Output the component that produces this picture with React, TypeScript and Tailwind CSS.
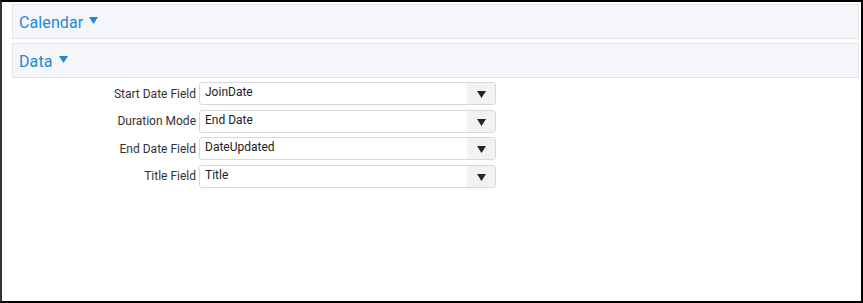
import React from "react";

function Tri({ className }: { className?: string }) {
  return (
    <svg width="9" height="7" viewBox="0 0 9 7" className={className}>
      <polygon points="0,0 9,0 4.5,7" fill="currentColor" />
    </svg>
  );
}

function Panel({ title }: { title: string }) {
  return (
    <div className="h-[35px] bg-[#f5f6fa] border border-[#e3e5e8] flex items-center pl-[6px] pt-[2px]">
      <span className="text-[16px] text-[#1f8ad6] leading-none tracking-[0.1px]">{title}</span>
      <Tri className="ml-[6px] mt-[-4px] text-[#1f8ad6]" />
    </div>
  );
}

function Row({ label, value }: { label: string; value: string }) {
  return (
    <div className="flex items-center h-[23px]">
      <div className="w-[187px] text-right text-[12px] text-[#333333] pr-[3px]">{label}</div>
      <div className="w-[297px] h-[23px] border border-[#d6d8db] rounded-[3px] flex bg-white overflow-hidden">
        <div className="flex-1 pl-[5px] text-[12px] text-[#222222] leading-[18px]">{value}</div>
        <div className="w-[28px] bg-[#f2f2f3] flex items-center justify-center pt-[2px]">
          <Tri className="text-[#1d2733]" />
        </div>
      </div>
    </div>
  );
}

export default function App() {
  return (
    <div
      className="w-[863px] h-[303px] border-t-2 border-b-2 border-r-2 border-l-2 border-black border-l-[#333333] bg-white pl-[10px] pr-[2px] pt-[2px]"
      style={{ fontFamily: "Roboto, 'Liberation Sans', sans-serif" }}
    >
      <div className="flex flex-col gap-[4px]">
        <Panel title="Calendar" />
        <Panel title="Data" />
      </div>
      <div className="flex flex-col gap-[4.6px] mt-[4px]">
        <Row label="Start Date Field" value="JoinDate" />
        <Row label="Duration Mode" value="End Date" />
        <Row label="End Date Field" value="DateUpdated" />
        <Row label="Title Field" value="Title" />
      </div>
    </div>
  );
}
